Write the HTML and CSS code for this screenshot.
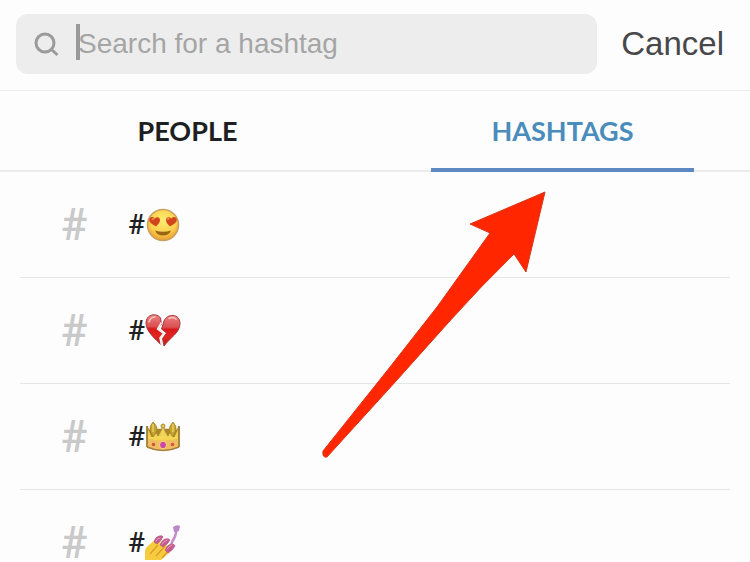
FILE: index.html
```html
<!DOCTYPE html>
<html lang="en">
<head>
<meta charset="utf-8">
<meta name="viewport" content="width=device-width, initial-scale=1">
<title>Search</title>
<link rel="stylesheet" href="styles.css">
</head>
<body>
<main class="screen">
  <header class="search-bar">
    <label class="search-field">
      <svg class="search-icon" viewBox="0 0 26 26" aria-hidden="true"><circle cx="11" cy="12" r="9"/><path d="M17.500 18.500l6 5.500"/></svg>
      <span class="caret"></span>
      <input class="search-input" type="search" placeholder="Search for a hashtag" aria-label="Search for a hashtag">
    </label>
    <button class="cancel" type="button">Cancel</button>
  </header>
  <nav class="tabs">
    <button class="tab" type="button">PEOPLE</button>
    <button class="tab tab-active" type="button">HASHTAGS</button>
  </nav>
  <ul class="results">
    <li class="result">
      <span class="hash-icon">#</span>
      <a class="tag" href="#love">#<svg class="emoji" viewBox="0 0 36 36" role="img" aria-label="Heart eyes">
        <defs>
          <radialGradient id="face" cx="50%" cy="35%" r="65%"><stop offset="0" stop-color="#ffed70"/><stop offset=".65" stop-color="#fbd04e"/><stop offset="1" stop-color="#e99b2e"/></radialGradient>
        </defs>
        <circle cx="18" cy="18" r="15.500" fill="url(#face)" stroke="#c9a060" stroke-width="1.500"/>
        <path d="M11 19.500C7 17 4 15.500 4.200 12.500c.3-3 4.200-3.600 5.600-.8 1.800-2.400 5.400-1.500 5.200 1.500-.2 3-2.300 4-4 6.300z" fill="#d2441c"/>
        <path d="M25 19.500c4-2.500 7-4 6.800-7-.3-3-4.200-3.600-5.600-.8-1.800-2.400-5.400-1.500-5.200 1.500.2 3 2.300 4 4 6.300z" fill="#d2441c"/>
        <path d="M7 13q1-2 2.500-1.500M22.500 13q.5-1.800 2-1.500" fill="none" stroke="#f38a56" stroke-width="1.500"/>
        <path d="M10 23.500q8 2.500 16 0-2 5-8 5t-8-5z" fill="#9a6512"/>
      </svg></a>
    </li>
    <li class="result">
      <span class="hash-icon">#</span>
      <a class="tag" href="#heartbreak">#<svg class="emoji" viewBox="0 0 36 36" role="img" aria-label="Broken heart">
        <defs>
          <linearGradient id="heart" x1="0" y1="0" x2="0" y2="1"><stop offset="0" stop-color="#e98180"/><stop offset=".38" stop-color="#dc5052"/><stop offset=".46" stop-color="#d9181a"/><stop offset=".7" stop-color="#e32420"/><stop offset="1" stop-color="#b81d20"/></linearGradient>
        </defs>
        <path d="M15.500 5C12-.3 1 .5 1 10.500 1 19 11 26 16.500 32.500L15 25l3.500-4.500L12.500 16l4-5z" fill="url(#heart)" stroke="#a6383c"/>
        <path d="M19 8C22 .3 35 0 35 10.500 35 20 24.500 25 19 33l-1.500-7.500 4-5.500-5-4z" fill="url(#heart)" stroke="#a6383c"/>
        <path d="M4 9q1.500-5 6-5M24 5.500q4-2 7 .5" fill="none" stroke="#f7c5c3" stroke-width="1.500" stroke-linecap="round"/>
        <path d="M16.500 9.500l-4 6.500 6 4.500L15 25l1.500 8" fill="none" stroke="#fdf3f2" stroke-width="1.500"/>
      </svg></a>
    </li>
    <li class="result">
      <span class="hash-icon">#</span>
      <a class="tag" href="#queen">#<svg class="emoji" viewBox="0 0 36 36" role="img" aria-label="Crown">
        <defs>
          <linearGradient id="gold" x1="0" y1="0" x2="0" y2="1"><stop offset="0" stop-color="#dfbf45"/><stop offset=".5" stop-color="#f5d855"/><stop offset="1" stop-color="#e9a43c"/></linearGradient>
        </defs>
        <path d="M3 11q15-3 30 0v13H3z" fill="#aa8627"/>
        <path d="M2 7l5 11 2-9 4 8 5-9 5 9 4-8 2 9 5-11v21q-16 7-32 0z" fill="url(#gold)" stroke="#ae8b35"/>
        <path d="M8 3q-4 4-3 9l3 6 4-6q1-5-4-9zM28 3q-4 4-4 9l4 6 3-6q1-5-3-9z" fill="#c6a32f" stroke="#98781c" stroke-width=".7"/>
        <path d="M18 8v11M8 5v8M28 5v8" stroke="#eedb70" stroke-width="1.200"/>
        <circle cx="18" cy="7" r="2" fill="#e5ca58" stroke="#aa8732"/>
        <path d="M2 19q16 6 32 0v9q-16 7-32 0z" fill="#f0be62"/>
        <path d="M2 28q16 7 32 0" fill="none" stroke="#a87f42" stroke-width="1.500"/>
        <path d="M2 7v21M34 7v21" stroke="#967631" stroke-width="1.500"/>
        <ellipse cx="18" cy="26" rx="3.500" ry="3.800" fill="#cb48a5" stroke="#f8da80"/>
        <circle cx="8.500" cy="25.500" r="1.800" fill="#d6533d"/><circle cx="27.500" cy="25.500" r="1.800" fill="#d6533d"/>
      </svg></a>
    </li>
    <li class="result">
      <span class="hash-icon">#</span>
      <a class="tag" href="#nails">#<svg class="emoji" viewBox="0 0 36 36" role="img" aria-label="Nail polish">
        <path d="M31.500 5q-1 7-4 11l-3 9" fill="none" stroke="#c090c8" stroke-width="2.500" stroke-linecap="round"/>
        <path d="M28 2q4-3 7-1l-1 5-5 1z" fill="#bd86c9"/>
        <path d="M0 35V26q1-4 4-6l9-8 4 2-3 5 6-5 4 2-3 5 5-2 2 3-4 6-8 7z" fill="#f6cb3d"/>
        <path d="M5 29l8-9M11 31l9-10M17 33l7-8" stroke="#da9b28" stroke-width="1.200"/>
        <g fill="#c65c91" stroke="#ad5580" stroke-width=".6">
          <path d="M9 17q1-5 5-6 4-1 4 1-2 4-6 7z"/>
          <path d="M15 20q2-5 5-6 4-1 5 1-2 4-7 7z"/>
          <path d="M20 25q2-5 6-6 4 0 4 2-2 4-7 7z"/>
        </g>
        <path d="M11 16q1-3 4-3M17 19q2-3 5-4M22 24q2-3 5-4" fill="none" stroke="#e7a0c1" stroke-linecap="round"/>
      </svg></a>
    </li>
  </ul>
  <svg class="pointer" viewBox="0 0 226 268" aria-hidden="true"><path d="M224 1L149 33l20 9L116 116 69 176 2 260Q1 267 6 266L76 189 127 132Q160 95 193 63l12 18z"/></svg>
</main>
</body>
</html>
```

FILE: styles.css
```css
* {
  box-sizing: border-box;
}

body {
  margin: 0;
  background: #fdfdfd;
  color: #1e1f22;
  font-family: Lato, sans-serif;
}

button {
  padding: 0;
  border: 0;
  background: none;
  font: inherit;
  color: inherit;
}

.screen {
  position: relative;
  height: 100vh;
  overflow: hidden;
}

.search-bar {
  display: flex;
  align-items: center;
  gap: 24px;
  padding: 14px 26px 16px 16px;
  border-bottom: 1px solid #ececec;
  font-family: "Liberation Sans", sans-serif;
}

.search-field {
  position: relative;
  display: flex;
  flex: 1;
  align-items: center;
  gap: 18px;
  min-width: 0;
  height: 60px;
  padding: 0 18px;
  border-radius: 12px;
  background: #ededed;
}

.search-icon {
  flex: none;
  width: 26px;
  height: 26px;
  fill: none;
  stroke: #9b9b9b;
  stroke-width: 3;
}

.search-input {
  flex: 1;
  min-width: 0;
  padding: 0;
  border: 0;
  outline: 0;
  appearance: none;
  background: none;
  font: 28px/36px "Liberation Sans", sans-serif;
  color: #47474a;
}

.search-input::placeholder {
  color: #a5a5a6;
}

.caret {
  position: absolute;
  top: 10px;
  left: 60px;
  width: 4px;
  height: 36px;
  background: #999;
}

.cancel {
  font-size: 33px;
  line-height: 36px;
  color: #48484b;
}

.tabs {
  display: grid;
  grid-template-columns: 1fr 1fr;
  height: 81px;
  border-bottom: 2px solid #ebebeb;
}

.tab {
  position: relative;
  font-size: 27px;
  font-weight: 700;
}

.tab-active {
  color: #4a8cbc;
}

.tab-active::after {
  content: "";
  position: absolute;
  left: 15%;
  right: 15%;
  bottom: -2px;
  height: 4px;
  background: #5d88c2;
}

.results {
  margin: 0;
  padding: 0 20px;
  list-style: none;
}

.result {
  display: flex;
  align-items: center;
  gap: 40px;
  height: 106px;
  padding-left: 40px;
  border-bottom: 1px solid #e6e6e6;
  font-family: Roboto, sans-serif;
  font-weight: 500;
}

.hash-icon {
  width: 28px;
  font-size: 44px;
  line-height: 36px;
  text-align: center;
  color: #c9c9c9;
}

.tag {
  display: flex;
  align-items: center;
  font-size: 28px;
  line-height: 36px;
  color: inherit;
  text-decoration: none;
}

.emoji {
  width: 36px;
  height: 36px;
}

.pointer {
  position: absolute;
  top: 191px;
  left: 321px;
  width: 226px;
  height: 268px;
  fill: #ff2600;
  stroke: #d93818;
  stroke-width: 1;
}
```
